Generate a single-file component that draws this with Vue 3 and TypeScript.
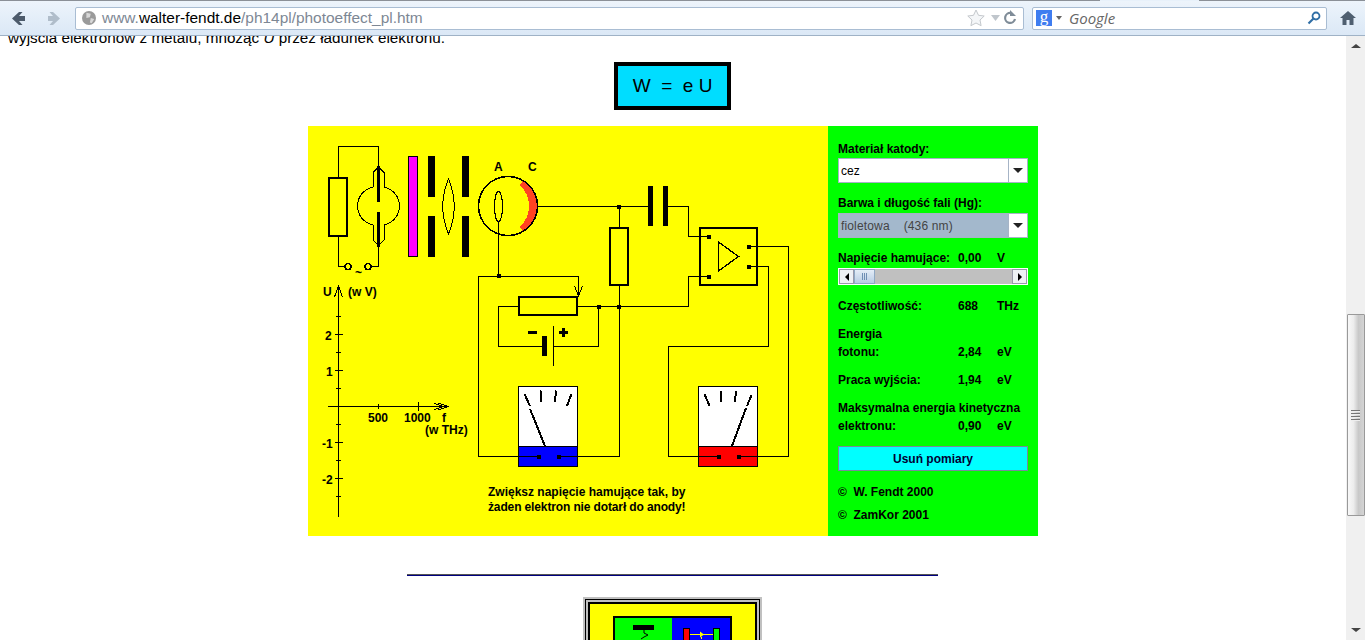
<script setup lang="ts">
const majorY = [334, 370, 442, 478]
const minorY = [316, 352, 388, 424, 460, 496]
const nodes: [number, number][] = [
  [499, 276], [619, 207], [619, 307], [599, 307], [709, 237], [709, 277], [749, 247], [749, 267],
  [539, 457], [559, 457], [719, 457], [739, 457],
]
</script>

<template>
  <div class="screen">
    <div class="tabs"><span class="tab-dark"></span><span class="tab-light"></span><span class="tab-rest"></span></div>
    <header class="toolbar">
      <svg class="nav" width="66" height="24" viewBox="0 0 66 24">
        <path d="M12 12.500L19 6H22.500L19 10H25V15H19L22.500 19H19Z" fill="#4d5b6b" />
        <path d="M60 12.500L53 6H49.500L53 10H48V15H53L49.500 19H53Z" fill="#b0bdca" />
      </svg>
      <div class="urlbar">
        <svg width="14" height="14" viewBox="0 0 16 16" class="globe">
          <circle cx="8" cy="8" r="8" fill="#9a9a9a" />
          <path d="M5 2l5 1-1 4-4 1zM10 8l4 1-3 5-2-1z" fill="#d8d8d8" />
        </svg>
        <span class="url"><span class="dim">www.</span>walter-fendt.de<span class="dim">/ph14pl/photoeffect_pl.htm</span></span>
        <span class="spacer"></span>
        <svg class="url-icons" width="52" height="20" viewBox="0 0 52 20">
          <path d="M10 2l2.500 5.300 5.700.7-4.200 4 1.100 5.700L10 15l-5.100 2.700L6 12 1.800 8l5.700-.7z" fill="#f4f6f8" stroke="#c4c8cc" />
          <path d="M25 7h9l-4.500 6z" fill="#c0c6cc" />
          <path d="M45 5a5 5 0 1 0 4 6" fill="none" stroke="#7f8c98" stroke-width="2.200" />
          <path d="M44 2v6h6z" fill="#7f8c98" />
        </svg>
      </div>
      <div class="search">
        <span class="g">g</span>
        <svg width="6" height="4" viewBox="0 0 6 4" class="caret"><path d="M0 0h6L3 4z" fill="#666" /></svg>
        <span class="google">Google</span>
        <span class="spacer"></span>
        <svg width="14" height="14" viewBox="0 0 14 14">
          <circle cx="9" cy="5" r="3.500" fill="none" stroke="#2f6ea5" stroke-width="1.800" />
          <path d="M6.500 7.500L1.500 12.500" stroke="#2f6ea5" stroke-width="2.200" />
        </svg>
      </div>
      <svg class="home" width="18" height="16" viewBox="0 0 18 16">
        <path d="M9 1L1 8h2.500v7H7.500v-5h3v5h4V8H17z" fill="#4f5f70" />
      </svg>
    </header>

    <div class="viewport">
      <main class="page">
        <p class="lead">wyjścia elektronów z metalu, mnożąc <i>U</i> przez ładunek elektronu.</p>
        <div class="formula">W &nbsp;=&nbsp; e U</div>

        <section class="applet">
          <svg class="diagram" width="520" height="410" viewBox="308 126 520 410">
            <g fill="none" stroke="#000" stroke-width="1">
              <path d="M338.500 177V146.500H378.500V168M338.500 237V266.500H345M371 266.500H378.500V246" />
              <path d="M537 206.500H648M668 206.500H688.500V236.500H709M619.500 206.500V227M619.500 286V456.500H559" />
              <path d="M578 306.500H599M598.500 306.500V346.500H553M542 346.500H498.500V306.500H518M599 306.500H688.500V276.500H709" />
              <path d="M498.500 222V276.500M539 456.500H478.500V276.500H578.500V296" />
              <path d="M749 246.500H788.500V456.500H739M749 266.500H768.500V346.500H668.500V456.500H719" />
            </g>

            <rect x="329" y="178" width="18" height="58" fill="none" stroke="#000" stroke-width="2" />
            <circle cx="348" cy="266.500" r="3" fill="none" stroke="#000" stroke-width="1.500" />
            <circle cx="368" cy="266.500" r="3" fill="none" stroke="#000" stroke-width="1.500" />
            <path d="M378.500 167L373 172.500V187A20 19.500 0 0 0 373 225V240L378.500 245.500L384 240V225A20 19.500 0 0 0 384 187V172.500Z" fill="none" stroke="#000" />
            <path d="M378.500 166V202M378.500 212V247" stroke="#000" stroke-width="3" />

            <rect x="408.500" y="156.500" width="9" height="100" fill="#ff00ff" stroke="#000" />
            <g fill="#000">
              <rect x="428" y="156" width="7" height="41" />
              <rect x="428" y="216" width="7" height="41" />
              <rect x="462" y="156" width="7" height="41" />
              <rect x="462" y="216" width="7" height="41" />
              <rect x="648" y="186" width="5" height="40" />
              <rect x="663" y="186" width="5" height="40" />
            </g>
            <path d="M448.500 179Q437 206 448.500 234Q460 206 448.500 179Z" fill="none" stroke="#000" />
            <path d="M523 180.600A29.500 29.500 0 0 1 523 231.400L520 227A29 29 0 0 0 520 185Z" fill="#ff4422" />
            <circle cx="508" cy="206" r="29.500" fill="none" stroke="#000" stroke-width="1.500" />
            <ellipse cx="498.500" cy="206.500" rx="4" ry="15" fill="none" stroke="#000" stroke-width="1.200" />

            <rect x="610" y="228" width="18" height="57" fill="none" stroke="#000" stroke-width="2" />
            <rect x="700" y="228" width="57" height="57" fill="none" stroke="#000" stroke-width="2" />
            <path d="M718.500 242V271L738.500 256.500Z" fill="none" stroke="#000" stroke-width="1.300" />

            <rect x="519" y="297" width="58" height="18" fill="none" stroke="#000" stroke-width="2" />
            <path d="M574.500 286L578.500 296L582.500 286" fill="none" stroke="#000" />
            <rect x="542" y="336" width="5" height="20" />
            <rect x="552.500" y="326" width="1.500" height="40" />
            <rect x="528" y="331" width="9" height="3" />
            <path d="M563 328v9M558.500 332.500h9" stroke="#000" stroke-width="3" />

            <g>
              <rect x="518.500" y="386.500" width="59" height="60" fill="#fff" stroke="#000" />
              <rect x="518.500" y="446.500" width="59" height="20" fill="#0000ff" stroke="#000" />
              <path d="M524.500 394L530 406M540.500 390.500L541 402M556 390.500L555 402M571.500 394L567 406M530 409L545 446" stroke="#000" stroke-width="2" />
            </g>
            <g>
              <rect x="698.500" y="386.500" width="59" height="60" fill="#fff" stroke="#000" />
              <rect x="698.500" y="446.500" width="59" height="20" fill="#ff0000" stroke="#000" />
              <path d="M704.500 394L709.500 406M720.500 391L721.500 402M736 391L735 402M751.500 395L747 406M746 408L732 446" stroke="#000" stroke-width="2" />
            </g>
            <path d="M478.500 456.500H539M559 456.500H619.500M668.500 456.500H719M739 456.500H788.500" fill="none" stroke="#000" />

            <rect v-for="([x, y], i) in nodes" :key="i" :x="x - 2" :y="y - 2" width="4" height="4" fill="#000" />

            <g stroke="#000" fill="none">
              <path d="M338.500 286V516.500M334.500 297L338.500 286L342.500 297M328 406.500H448M438 403L448 406.500L438 410M434 403.500L444 406.500L434 409.500" />
              <path v-for="y in majorY" :key="y" :d="`M335 ${y + 0.5}H343`" />
              <path v-for="y in minorY" :key="y" :d="`M336 ${y + 0.5}H341`" />
              <path d="M378.500 404V409M418.500 402V411" />
            </g>

            <g class="dtext">
              <text x="494" y="171">A</text>
              <text x="528" y="171">C</text>
              <text x="355" y="277">~</text>
              <text x="323" y="296">U</text>
              <text x="348" y="296">(w V)</text>
              <text x="325" y="340">2</text>
              <text x="326" y="376">1</text>
              <text x="322" y="448">-1</text>
              <text x="322" y="484">-2</text>
              <text x="368" y="422">500</text>
              <text x="404" y="422">1000</text>
              <text x="442" y="422">f</text>
              <text x="425" y="434">(w THz)</text>
              <text x="488" y="496">Zwiększ napięcie hamujące tak, by</text>
              <text x="488" y="511" class="tight">żaden elektron nie dotarł do anody!</text>
            </g>
          </svg>

          <aside class="panel">
            <label class="lbl first">Materiał katody:</label>
            <div class="combo">
              <span class="field">cez</span>
              <span class="drop"><i class="tri"></i></span>
            </div>
            <label class="lbl second">Barwa i długość fali (Hg):</label>
            <div class="combo selected">
              <span class="field">fioletowa &nbsp;&nbsp; (436 nm)</span>
              <span class="drop"><i class="tri"></i></span>
            </div>
            <div class="row r-volt"><span>Napięcie hamujące:</span><span>0,00</span><span>V</span></div>
            <div class="scroll">
              <span class="sbtn"><i class="larr"></i></span>
              <span class="thumb"><i></i><i></i><i></i></span>
              <span class="track"></span>
              <span class="sbtn"><i class="rarr"></i></span>
            </div>
            <div class="row r-freq"><span>Częstotliwość:</span><span>688</span><span>THz</span></div>
            <div class="line r-e1">Energia</div>
            <div class="row"><span>fotonu:</span><span>2,84</span><span>eV</span></div>
            <div class="row r-w"><span>Praca wyjścia:</span><span>1,94</span><span>eV</span></div>
            <div class="line r-k1">Maksymalna energia kinetyczna</div>
            <div class="row"><span>elektronu:</span><span>0,90</span><span>eV</span></div>
            <button class="clear" type="button">Usuń pomiary</button>
            <div class="line r-c1">©&nbsp; W. Fendt 2000</div>
            <div class="line r-c2">©&nbsp; ZamKor 2001</div>
          </aside>
        </section>

        <hr class="rule" />

        <div class="frame-a">
          <div class="frame-b">
            <div class="frame-c">
              <div class="frame-d">
                <svg class="mini" width="119" height="60" viewBox="613 617 119 60">
                  <rect x="613" y="617" width="119" height="60" fill="#000" />
                  <rect x="615" y="619" width="57" height="58" fill="#00ff00" />
                  <rect x="672" y="619" width="58" height="58" fill="#0000ff" />
                  <rect x="633" y="626" width="21" height="5" fill="#000" />
                  <path d="M644 631V634L648 636L644 638L641 640" fill="none" stroke="#000" />
                  <rect x="683.500" y="629.500" width="6" height="20" fill="#ff0000" stroke="#000" />
                  <rect x="713.500" y="629.500" width="6" height="20" fill="#00ff00" stroke="#000" />
                  <path d="M690 635.500H713M701.500 638V640" stroke="#ffff00" />
                  <path d="M700 632.500L704 635.500L700 638.500Z" fill="#ffff00" />
                </svg>
              </div>
            </div>
          </div>
        </div>
      </main>

      <div class="vscroll">
        <i class="up"></i>
        <span class="vthumb"><i></i><i></i><i></i><i></i></span>
        <i class="down"></i>
      </div>
    </div>
  </div>
</template>

<style>
html, body { margin: 0; overflow: hidden; background: #fff; }
</style>

<style scoped>
.screen { width: 1365px; height: 640px; display: flex; flex-direction: column; overflow: hidden; font-family: "Liberation Sans", Arial, sans-serif; }
.tabs { height: 1px; flex: none; display: flex; }
.tab-dark { width: 1100px; background: #8b9097; }
.tab-light { width: 99px; background: #e8f1fa; }
.tab-rest { flex: 1; background: #8b9097; }
.toolbar { height: 34px; flex: none; display: flex; align-items: center; background: linear-gradient(#edf4fb, #dbe8f6); border-bottom: 1px solid #9fb2c6; }
.nav { margin-right: 9px; flex: none; }
.urlbar { width: 947px; height: 21px; flex: none; background: #fff; border: 1px solid #a9bdd3; border-radius: 2px; display: flex; align-items: center; }
.globe { margin: 0 6px; flex: none; }
.url { font-size: 15.450px; color: #000; white-space: nowrap; }
.dim { color: #7d8794; }
.spacer { flex: 1; }
.url-icons { margin-right: 5px; }
.search { width: 288px; height: 21px; flex: none; margin-left: 8px; padding-right: 5px; background: #fff; border: 1px solid #a9bdd3; border-radius: 2px; display: flex; align-items: center; }
.g { width: 16px; height: 16px; margin-left: 3px; background: #3f7df0; color: #fff; font: 17px/13px "Liberation Serif", serif; text-align: center; }
.caret { margin-left: 4px; }
.google { margin-left: 7px; font: italic 15px "Open Sans", sans-serif; color: #666; }
.home { margin-left: 12px; }

.viewport { flex: 1; min-height: 0; display: flex; }
.page { flex: 1; min-width: 0; overflow: hidden; display: flex; flex-direction: column; align-items: center; }
.lead { align-self: flex-start; margin: -7px 0 0 8px; font-size: 15.270px; line-height: 18px; color: #000; white-space: nowrap; }
.formula { margin: 15px 1px 0 0; width: 109px; height: 40px; border: 4px solid #000; background: #00ddff; font-size: 19px; line-height: 40px; text-align: center; white-space: nowrap; }
.applet { margin-top: 16px; width: 730px; height: 410px; flex: none; display: flex; }
.diagram { flex: none; display: block; background: #ffff00; shape-rendering: crispEdges; }
.dtext text { font: bold 12px "Liberation Sans", Arial, sans-serif; fill: #000; }
.dtext .tight { letter-spacing: -0.130px; }

.panel { width: 210px; flex: none; background: #00ff00; box-sizing: border-box; padding: 0 10px; display: flex; flex-direction: column; font: bold 12px/18px "Liberation Sans", Arial, sans-serif; color: #000; }
.lbl { display: block; }
.first { margin-top: 14px; }
.second { margin-top: 11px; }
.combo { height: 25px; flex: none; display: flex; border: 1px solid #a6b4c6; box-sizing: border-box; background: #fff; }
.selected { margin-top: 1px; }
.field { flex: 1; font-weight: normal; line-height: 23px; padding-left: 1px; border: 1px solid #fff; background: #fff; }
.selected .field { background: #a3b8cc; border-color: #a3b8cc; color: #444; letter-spacing: 0.150px; }
.drop { width: 18px; border-left: 1px solid #a6b4c6; display: flex; align-items: center; justify-content: center; }
.tri { width: 0; height: 0; border-left: 5px solid transparent; border-right: 5px solid transparent; border-top: 5px solid #222; }
.row { display: grid; grid-template-columns: 120px 39px auto; }
.line { white-space: nowrap; }
.r-volt { margin-top: 11px; }
.scroll { height: 17px; flex: none; margin-top: 1px; display: flex; background: #fff; padding: 1px; box-sizing: border-box; }
.sbtn { width: 15px; background: #eef1f5; border: 1px solid #99a; box-sizing: border-box; display: flex; align-items: center; justify-content: center; }
.larr { border-right: 4px solid #000; border-top: 4px solid transparent; border-bottom: 4px solid transparent; }
.rarr { border-left: 4px solid #000; border-top: 4px solid transparent; border-bottom: 4px solid transparent; }
.thumb { width: 21px; background: linear-gradient(#e4edf7, #b8cce4); border: 1px solid #8fa8c4; box-sizing: border-box; display: flex; gap: 1px; justify-content: center; padding: 3px 0; }
.thumb i { width: 1px; background: #6f8fb4; }
.track { flex: 1; background: #c0c0c0; }
.r-freq { margin-top: 12px; }
.r-e1 { margin-top: 10px; }
.r-w { margin-top: 10px; }
.r-k1 { margin-top: 10px; }
.clear { margin-top: 11px; height: 25px; flex: none; padding: 0; background: #00ffff; border: 1px solid #7a8a99; font: bold 12px "Liberation Sans", Arial, sans-serif; color: #000033; }
.r-c1 { margin-top: 12px; }
.r-c2 { margin-top: 5px; }

.rule { width: 531px; height: 2px; margin: 38px 1px 0 0; flex: none; border: 0; background: linear-gradient(#555 50%, #000080 50%); }
.frame-a { margin: 21px 1px 0 0; width: 179px; flex: none; box-sizing: border-box; border: 2px solid #c0c0c0; }
.frame-b { border: 1px solid #000; }
.frame-c { border: 2px solid #c0c0c0; }
.frame-d { border: 2px solid #000; background: #ffff00; padding: 12px 23px; }
.mini { display: block; }

.vscroll { width: 19px; flex: none; background: #f0f0f0; display: flex; flex-direction: column; align-items: center; box-sizing: border-box; }
.up { margin-top: 8px; width: 0; height: 0; border-left: 5px solid transparent; border-right: 5px solid transparent; border-bottom: 4px solid #444; }
.vthumb { margin-top: 266px; width: 18px; height: 202px; flex: none; box-sizing: border-box; border: 1px solid #999; border-radius: 1px; background: linear-gradient(90deg, #f8f8f8, #ececec 35%, #c8c8c8 65%, #d4d4d4); display: flex; flex-direction: column; align-items: center; justify-content: center; gap: 1px; }
.vthumb i { width: 9px; height: 1px; background: #777; border-bottom: 1px solid #eee; }
.down { margin-top: 112px; width: 0; height: 0; border-left: 5px solid transparent; border-right: 5px solid transparent; border-top: 4px solid #444; }
</style>
